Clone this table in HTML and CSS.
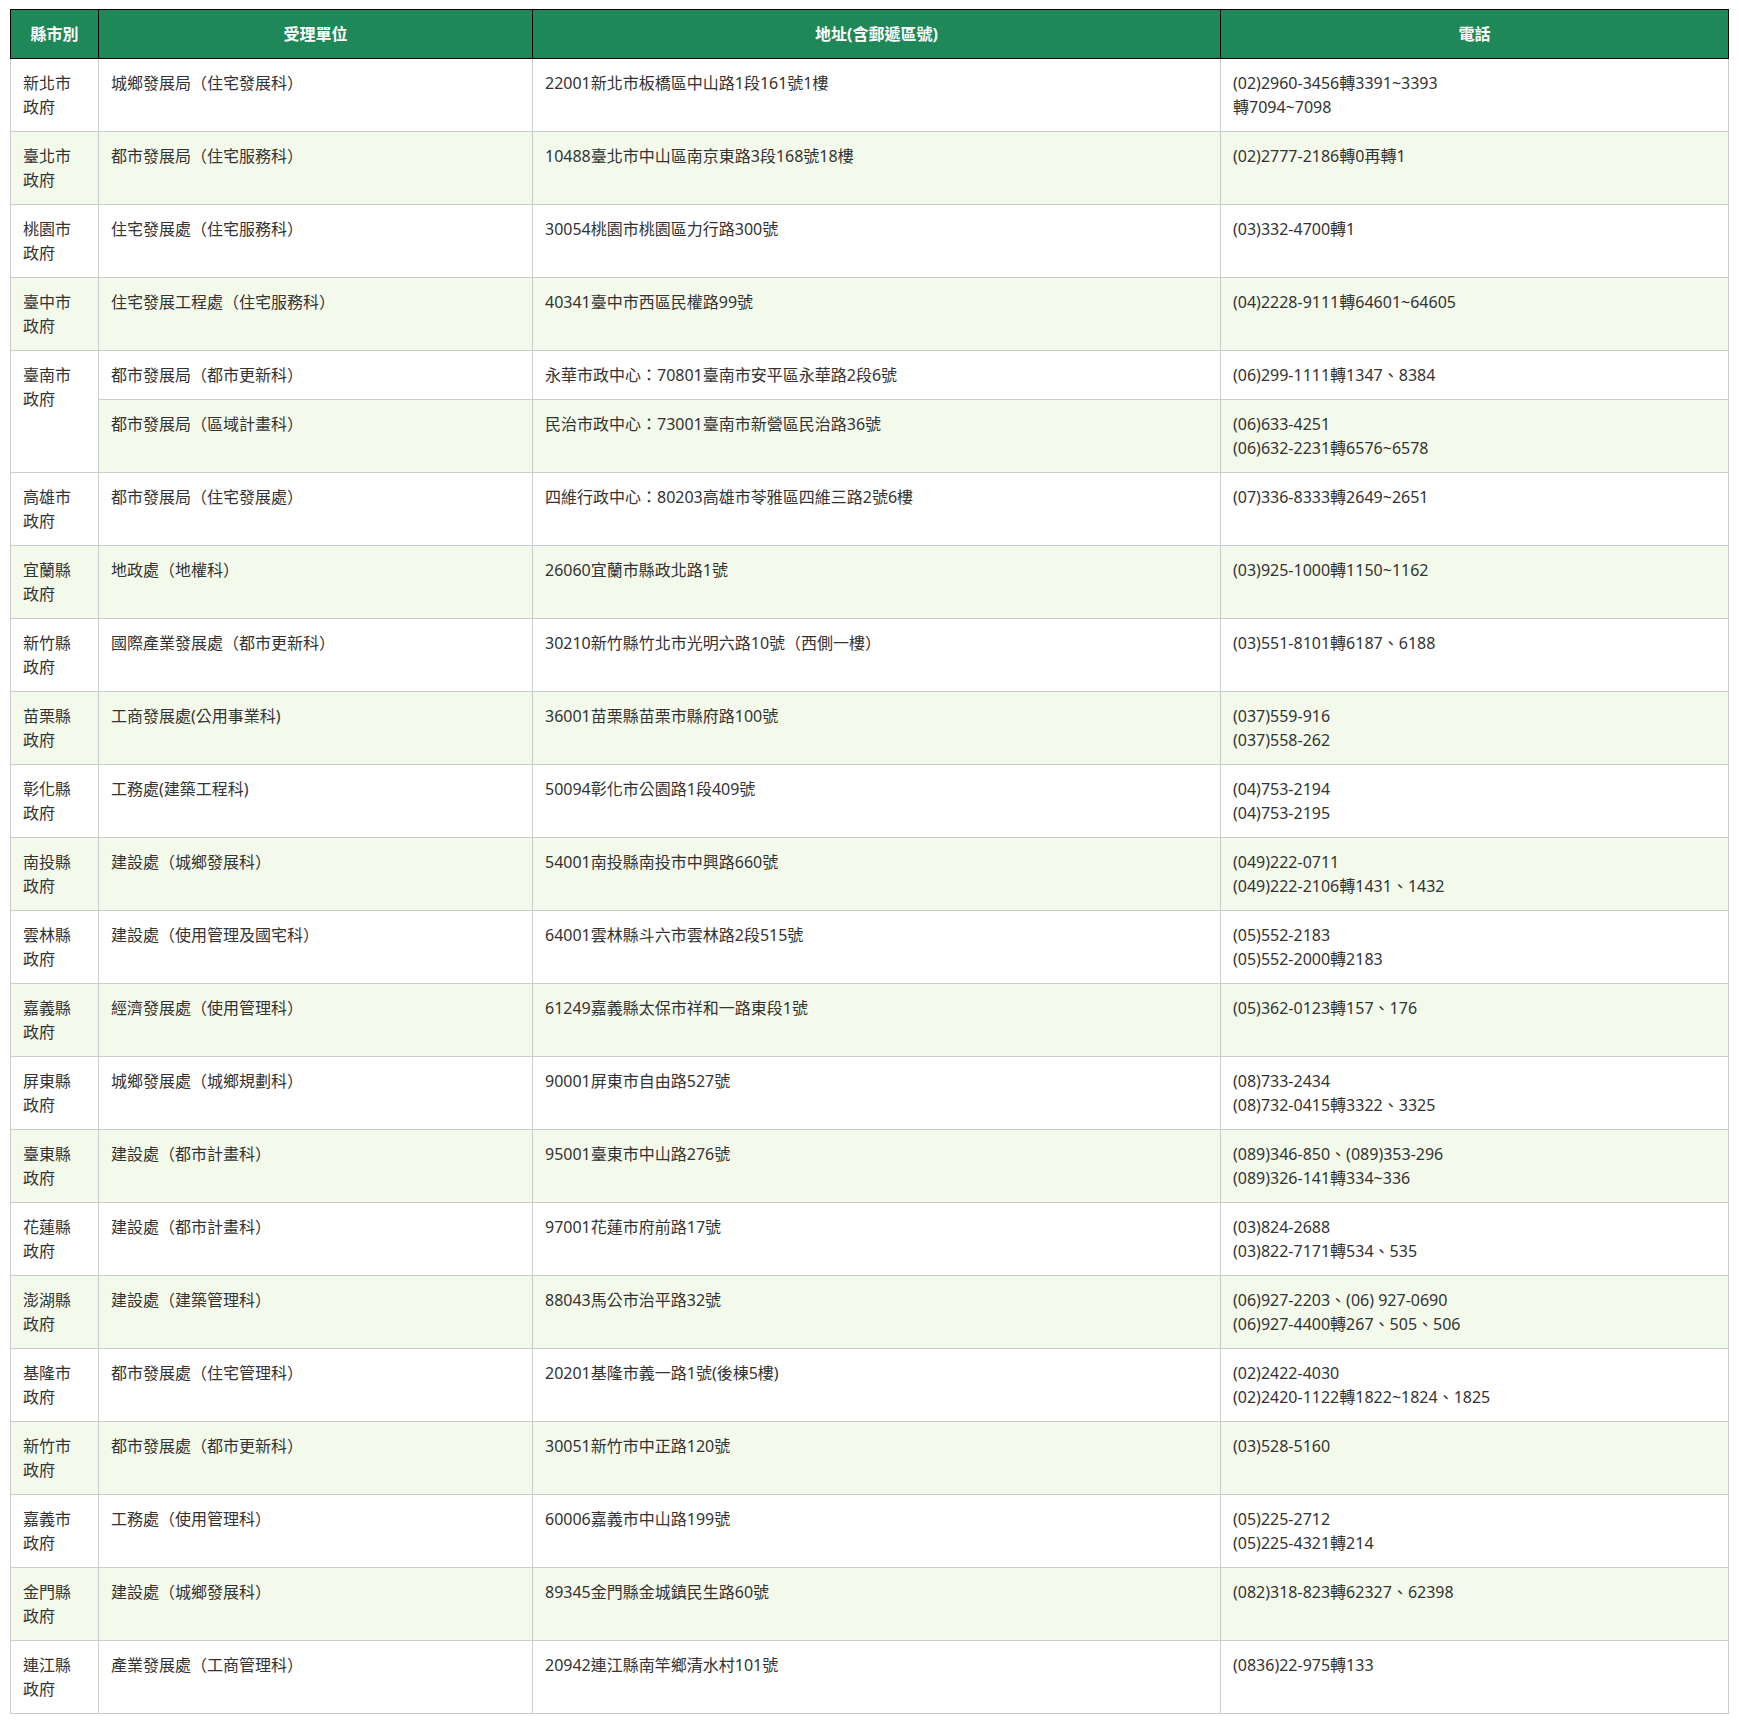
FILE: index.html
```html
<!DOCTYPE html>
<html lang="zh-Hant">
<head>
<meta charset="utf-8">
<title>受理單位</title>
<link rel="stylesheet" href="styles.css">
</head>
<body>
<table class="units">
<colgroup>
<col class="c-city">
<col class="c-unit">
<col class="c-addr">
<col class="c-tel">
</colgroup>
<thead>
<tr><th>縣市別</th><th>受理單位</th><th>地址(含郵遞區號)</th><th>電話</th></tr>
</thead>
<tbody>
<tr><td>新北市政府</td><td>城鄉發展局（住宅發展科）</td><td>22001新北市板橋區中山路1段161號1樓</td><td>(02)2960-3456轉3391~3393<br>轉7094~7098</td></tr>
<tr><td>臺北市政府</td><td>都市發展局（住宅服務科）</td><td>10488臺北市中山區南京東路3段168號18樓</td><td>(02)2777-2186轉0再轉1</td></tr>
<tr><td>桃園市政府</td><td>住宅發展處（住宅服務科）</td><td>30054桃園市桃園區力行路300號</td><td>(03)332-4700轉1</td></tr>
<tr><td>臺中市政府</td><td>住宅發展工程處（住宅服務科）</td><td>40341臺中市西區民權路99號</td><td>(04)2228-9111轉64601~64605</td></tr>
<tr><td rowspan="2" class="span">臺南市政府</td><td>都市發展局（都市更新科）</td><td>永華市政中心：70801臺南市安平區永華路2段6號</td><td>(06)299-1111轉1347、8384</td></tr>
<tr><td>都市發展局（區域計畫科）</td><td>民治市政中心：73001臺南市新營區民治路36號</td><td>(06)633-4251<br>(06)632-2231轉6576~6578</td></tr>
<tr><td>高雄市政府</td><td>都市發展局（住宅發展處）</td><td>四維行政中心：80203高雄市苓雅區四維三路2號6樓</td><td>(07)336-8333轉2649~2651</td></tr>
<tr><td>宜蘭縣政府</td><td>地政處（地權科）</td><td>26060宜蘭市縣政北路1號</td><td>(03)925-1000轉1150~1162</td></tr>
<tr><td>新竹縣政府</td><td>國際產業發展處（都市更新科）</td><td>30210新竹縣竹北市光明六路10號（西側一樓）</td><td>(03)551-8101轉6187、6188</td></tr>
<tr><td>苗栗縣政府</td><td>工商發展處(公用事業科)</td><td>36001苗栗縣苗栗市縣府路100號</td><td>(037)559-916<br>(037)558-262</td></tr>
<tr><td>彰化縣政府</td><td>工務處(建築工程科)</td><td>50094彰化市公園路1段409號</td><td>(04)753-2194<br>(04)753-2195</td></tr>
<tr><td>南投縣政府</td><td>建設處（城鄉發展科）</td><td>54001南投縣南投市中興路660號</td><td>(049)222-0711<br>(049)222-2106轉1431、1432</td></tr>
<tr><td>雲林縣政府</td><td>建設處（使用管理及國宅科）</td><td>64001雲林縣斗六市雲林路2段515號</td><td>(05)552-2183<br>(05)552-2000轉2183</td></tr>
<tr><td>嘉義縣政府</td><td>經濟發展處（使用管理科）</td><td>61249嘉義縣太保市祥和一路東段1號</td><td>(05)362-0123轉157、176</td></tr>
<tr><td>屏東縣政府</td><td>城鄉發展處（城鄉規劃科）</td><td>90001屏東市自由路527號</td><td>(08)733-2434<br>(08)732-0415轉3322、3325</td></tr>
<tr><td>臺東縣政府</td><td>建設處（都市計畫科）</td><td>95001臺東市中山路276號</td><td>(089)346-850、(089)353-296<br>(089)326-141轉334~336</td></tr>
<tr><td>花蓮縣政府</td><td>建設處（都市計畫科）</td><td>97001花蓮市府前路17號</td><td>(03)824-2688<br>(03)822-7171轉534、535</td></tr>
<tr><td>澎湖縣政府</td><td>建設處（建築管理科）</td><td>88043馬公市治平路32號</td><td>(06)927-2203、(06) 927-0690<br>(06)927-4400轉267、505、506</td></tr>
<tr><td>基隆市政府</td><td>都市發展處（住宅管理科）</td><td>20201基隆市義一路1號(後棟5樓)</td><td>(02)2422-4030<br>(02)2420-1122轉1822~1824、1825</td></tr>
<tr><td>新竹市政府</td><td>都市發展處（都市更新科）</td><td>30051新竹市中正路120號</td><td>(03)528-5160</td></tr>
<tr><td>嘉義市政府</td><td>工務處（使用管理科）</td><td>60006嘉義市中山路199號</td><td>(05)225-2712<br>(05)225-4321轉214</td></tr>
<tr><td>金門縣政府</td><td>建設處（城鄉發展科）</td><td>89345金門縣金城鎮民生路60號</td><td>(082)318-823轉62327、62398</td></tr>
<tr><td>連江縣政府</td><td>產業發展處（工商管理科）</td><td>20942連江縣南竿鄉清水村101號</td><td>(0836)22-975轉133</td></tr>
</tbody>
</table>
</body>
</html>
```

FILE: styles.css
```css
html, body {
  background: #ffffff;
}
body {
  margin: 0;
  padding: 9px 11px 0 10px;
  font-family: "Noto Sans", "Noto Sans CJK TC", sans-serif;
  font-size: 16px;
  line-height: 24px;
  color: #333333;
  text-spacing-trim: space-all;
}
.units {
  width: 100%;
  border-collapse: collapse;
  table-layout: fixed;
}
.c-city { width: 88px; }
.c-unit { width: 434px; }
.c-addr { width: 688px; }
.c-tel { width: 508px; }
.units th {
  background: #1f8858;
  color: #ffffff;
  font-weight: bold;
  text-align: center;
  padding: 12px;
  border: 1px solid #000000;
}
.units td {
  padding: 12px;
  border: 1px solid #cccccc;
  vertical-align: top;
  text-align: left;
}
.units tbody tr:nth-child(even) td {
  background: #f3faeb;
}
.units tbody tr:nth-child(even) td.span,
.units td.span {
  background: #ffffff;
}
```
